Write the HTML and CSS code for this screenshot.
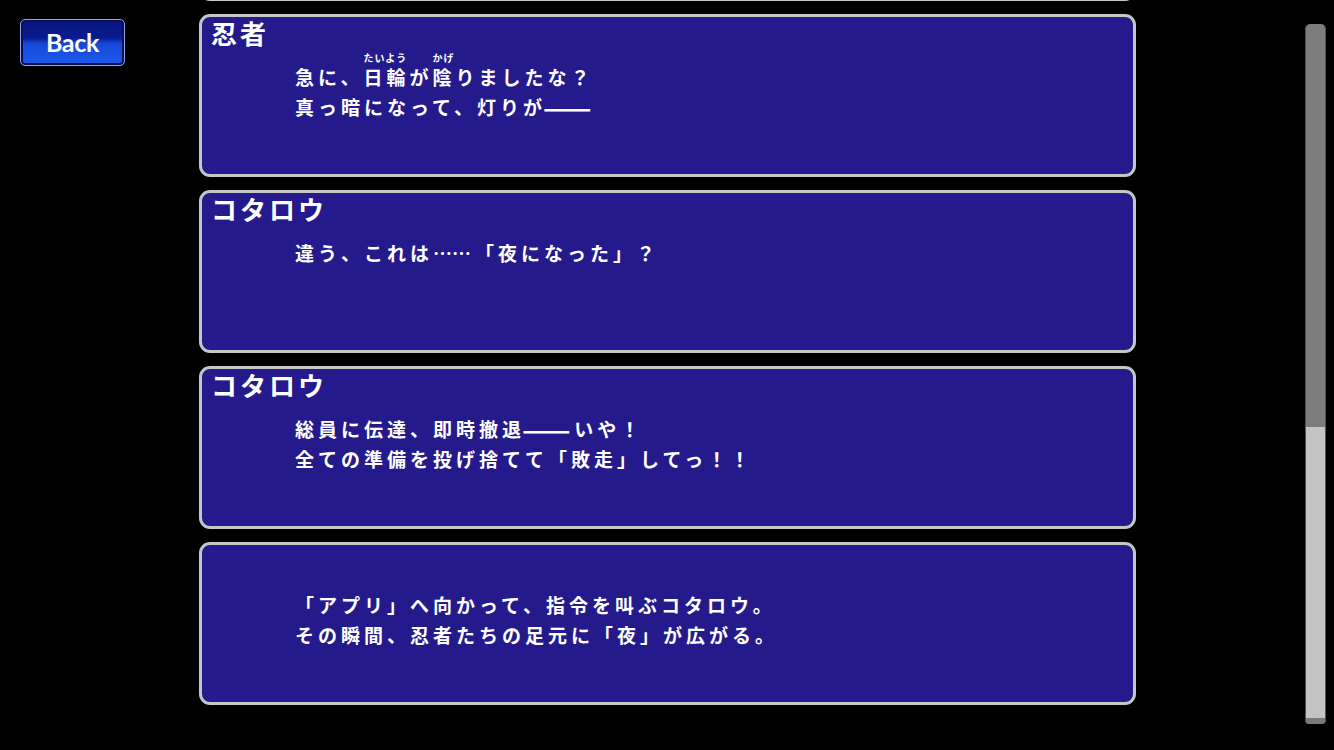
FILE: index.html
```html
<!DOCTYPE html>
<html lang="ja">
<head>
<meta charset="utf-8">
<title>Log</title>
<link rel="stylesheet" href="styles.css">
</head>
<body>
<div class="screen">
  <div class="side">
    <button class="back">Back</button>
  </div>
  <div class="log-view">
    <div class="log">
      <div class="msg">
        <div class="name"></div>
        <div class="lines"></div>
      </div>
      <div class="msg">
        <div class="name">忍者</div>
        <div class="lines">
          <div class="line">急に、<span class="rb">日輪<span class="rt">たいよう</span></span>が<span class="rb">陰<span class="rt">かげ</span></span>りましたな？</div>
          <div class="line">真っ暗になって、灯りが<span class="dash">——</span></div>
        </div>
      </div>
      <div class="msg">
        <div class="name">コタロウ</div>
        <div class="lines">
          <div class="line">違う、これは<span class="dots">……</span>「夜になった」？</div>
        </div>
      </div>
      <div class="msg">
        <div class="name">コタロウ</div>
        <div class="lines">
          <div class="line">総員に伝達、即時撤退<span class="dash">——</span>いや！</div>
          <div class="line">全ての準備を投げ捨てて「敗走」してっ！！</div>
        </div>
      </div>
      <div class="msg">
        <div class="name"></div>
        <div class="lines">
          <div class="line">「アプリ」へ向かって、指令を叫ぶコタロウ。</div>
          <div class="line">その瞬間、忍者たちの足元に「夜」が広がる。</div>
        </div>
      </div>
    </div>
  </div>
  <div class="scrollbar">
    <div class="thumb"></div>
  </div>
</div>
</body>
</html>
```

FILE: styles.css
```css
html, body {
  margin: 0;
  padding: 0;
  background: #000;
  overflow: hidden;
}

.screen {
  display: flex;
  align-items: flex-start;
  width: 1334px;
  height: 750px;
}

.side {
  padding: 19px 0 0 20px;
}

.back {
  display: block;
  width: 105px;
  height: 47px;
  margin: 0;
  padding: 0;
  border: 1px solid #8ea5ea;
  border-radius: 5px;
  box-shadow: inset 0 0 0 2px #0a0f55;
  background: linear-gradient(#061581 0%, #0a1b90 40%, #1747d6 52%, #1c5bee 100%);
  color: #fff;
  font-family: "Lato", "Open Sans", sans-serif;
  font-weight: 700;
  font-size: 25px;
  letter-spacing: -0.3px;
  line-height: 45px;
  text-align: center;
}

.log-view {
  margin-left: 74px;
  width: 937px;
  height: 750px;
  overflow: hidden;
}

.log {
  display: flex;
  flex-direction: column;
  gap: 13px;
  margin-top: -162px;
}

.msg {
  height: 163px;
  box-sizing: border-box;
  border: 3px solid #c6c6c6;
  border-radius: 11px;
  background: #251a8b;
  padding: 1px 9px 0;
  color: #fff;
  font-family: "Noto Sans CJK JP", sans-serif;
  font-weight: 700;
}

.name {
  height: 30px;
  line-height: 30px;
  font-size: 26px;
  letter-spacing: 3px;
}

.lines {
  margin: 14px 0 0 84px;
}

.line {
  height: 30px;
  line-height: 30px;
  font-size: 19px;
  letter-spacing: 4px;
  white-space: nowrap;
}

.rb {
  position: relative;
}

.rt {
  position: absolute;
  left: 0;
  right: 4px;
  top: -10px;
  font-size: 10px;
  line-height: 10px;
  letter-spacing: 1px;
  text-align: center;
  white-space: nowrap;
}

.dash {
  display: inline-block;
  letter-spacing: 0;
  line-height: 20px;
  transform: scale(1.5, 1.4);
  transform-origin: left center;
  margin: 0 20px 0 -3px;
}

.dots {
  letter-spacing: 0;
  margin-right: 4px;
}

.scrollbar {
  margin-left: 169px;
  margin-top: 24px;
  width: 21px;
  height: 700px;
  box-sizing: border-box;
  background: #7d7d7d;
  border-left: 1px solid #555;
  border-right: 1px solid #555;
  border-radius: 5px 5px 4px 4px;
  display: flex;
  flex-direction: column;
  justify-content: flex-end;
}

.thumb {
  height: 297px;
  box-sizing: border-box;
  background: #c4c4c4;
  border-bottom: 6px solid #7a7a7a;
  border-radius: 0 0 4px 4px;
}
```
